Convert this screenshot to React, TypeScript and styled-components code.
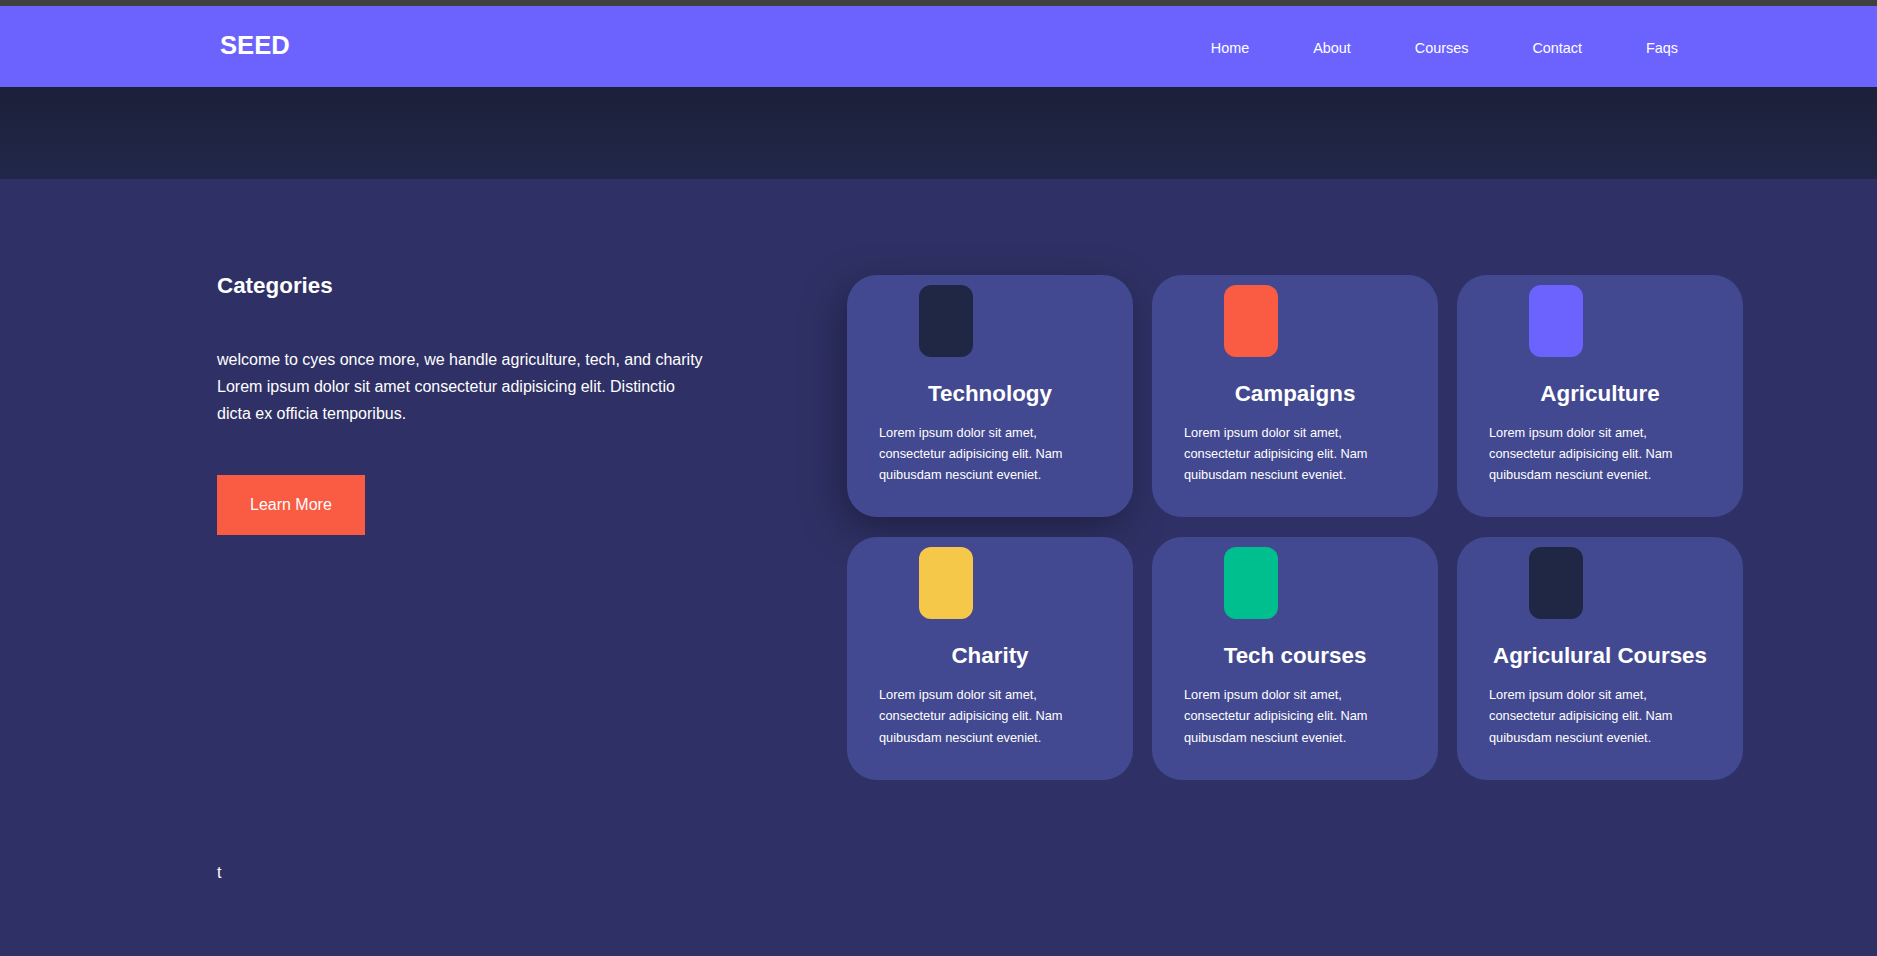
import React from 'react';
import styled, { createGlobalStyle } from 'styled-components';

const colors = {
  strip: '#404040',
  primary: '#6c63ff',
  navy: '#1f2744',
  page: '#2f3166',
  card: '#434990',
  accent: '#f95b43',
  yellow: '#f6c84a',
  green: '#00bf8f',
  white: '#ffffff',
};

const GlobalStyle = createGlobalStyle`
  * {
    box-sizing: border-box;
  }

  body {
    margin: 0;
    background-color: ${colors.page};
    color: ${colors.white};
    font-family: 'Liberation Sans', Arial, sans-serif;
  }
`;

const Page = styled.div`
  min-height: 100vh;
  background-color: ${colors.page};
`;

const Strip = styled.div`
  height: 6px;
  background-color: ${colors.strip};
`;

const Nav = styled.nav`
  height: 81px;
  background-color: ${colors.primary};
  display: flex;
  align-items: center;
  justify-content: space-between;
  padding: 0 199px 0 220px;
`;

const Logo = styled.h1`
  margin: -2px 0 0;
  font-size: 25.6px;
  font-weight: 700;
  line-height: 1;
`;

const Links = styled.ul`
  list-style: none;
  margin: 0;
  padding: 2px 0 0;
  display: flex;
  gap: 64px;
`;

const Link = styled.a`
  color: ${colors.white};
  text-decoration: none;
  font-size: 14.4px;
  cursor: pointer;
`;

const Hero = styled.div`
  height: 92px;
  background: linear-gradient(180deg, #1c2039 0%, #212749 100%);
`;

const Section = styled.section`
  padding: 94px 0 0 217px;
`;

const Row = styled.div`
  display: grid;
  grid-template-columns: 630px 896px;
  align-items: start;
`;

const Intro = styled.div`
  display: flex;
  flex-direction: column;
  align-items: flex-start;
`;

const Heading = styled.h2`
  margin: 0;
  font-size: 22.4px;
  font-weight: 700;
`;

const Lead = styled.p`
  margin: 47px 0 0;
  max-width: 492px;
  font-size: 16px;
  line-height: 1.7;
`;

const Button = styled.button`
  margin-top: 47px;
  border: none;
  padding: 21px 33px;
  background-color: ${colors.accent};
  color: ${colors.white};
  font-family: inherit;
  font-size: 16px;
  line-height: 1.15;
  cursor: pointer;
`;

const Grid = styled.div`
  margin-top: 2px;
  display: grid;
  grid-template-columns: repeat(3, 286px);
  gap: 20px 19px;
`;

const Card = styled.div<{ $raised?: boolean }>`
  background-color: ${colors.card};
  border-radius: 30px;
  padding: 10px 32px 32px;
  box-shadow: ${({ $raised }) =>
    $raised ? '-6px 12px 40px rgba(0, 0, 0, 0.35)' : 'none'};
`;

const Swatch = styled.div<{ $color: string }>`
  width: 54px;
  height: 72px;
  margin-left: 40px;
  border-radius: 12px;
  background-color: ${({ $color }) => $color};
`;

const CardTitle = styled.h3`
  margin: 24px 0 15px;
  text-align: center;
  font-size: 22.4px;
  font-weight: 700;
  white-space: nowrap;
`;

const CardText = styled.p`
  margin: 0;
  font-size: 12.8px;
  line-height: 1.65;
`;

const Footnote = styled.p`
  margin: 84px 0 0;
  font-size: 16px;
`;

const links = ['Home', 'About', 'Courses', 'Contact', 'Faqs'];

const categories = [
  { title: 'Technology', color: colors.navy },
  { title: 'Campaigns', color: colors.accent },
  { title: 'Agriculture', color: colors.primary },
  { title: 'Charity', color: colors.yellow },
  { title: 'Tech courses', color: colors.green },
  { title: 'Agriculural Courses', color: colors.navy },
];

const blurb =
  'Lorem ipsum dolor sit amet, consectetur adipisicing elit. Nam quibusdam nesciunt eveniet.';

const App: React.FC = () => (
  <>
    <GlobalStyle />
    <Page>
      <Strip />
      <Nav>
        <Logo>SEED</Logo>
        <Links>
          {links.map(link => (
            <li key={link}>
              <Link>{link}</Link>
            </li>
          ))}
        </Links>
      </Nav>
      <Hero />
      <Section>
        <Row>
          <Intro>
            <Heading>Categories</Heading>
            <Lead>
              welcome to cyes once more, we handle agriculture, tech, and charity
              Lorem ipsum dolor sit amet consectetur adipisicing elit. Distinctio
              dicta ex officia temporibus.
            </Lead>
            <Button>Learn More</Button>
          </Intro>
          <Grid>
            {categories.map(({ title, color }, idx) => (
              <Card key={title} $raised={idx === 0}>
                <Swatch $color={color} />
                <CardTitle>{title}</CardTitle>
                <CardText>{blurb}</CardText>
              </Card>
            ))}
          </Grid>
        </Row>
        <Footnote>t</Footnote>
      </Section>
    </Page>
  </>
);

export default App;
